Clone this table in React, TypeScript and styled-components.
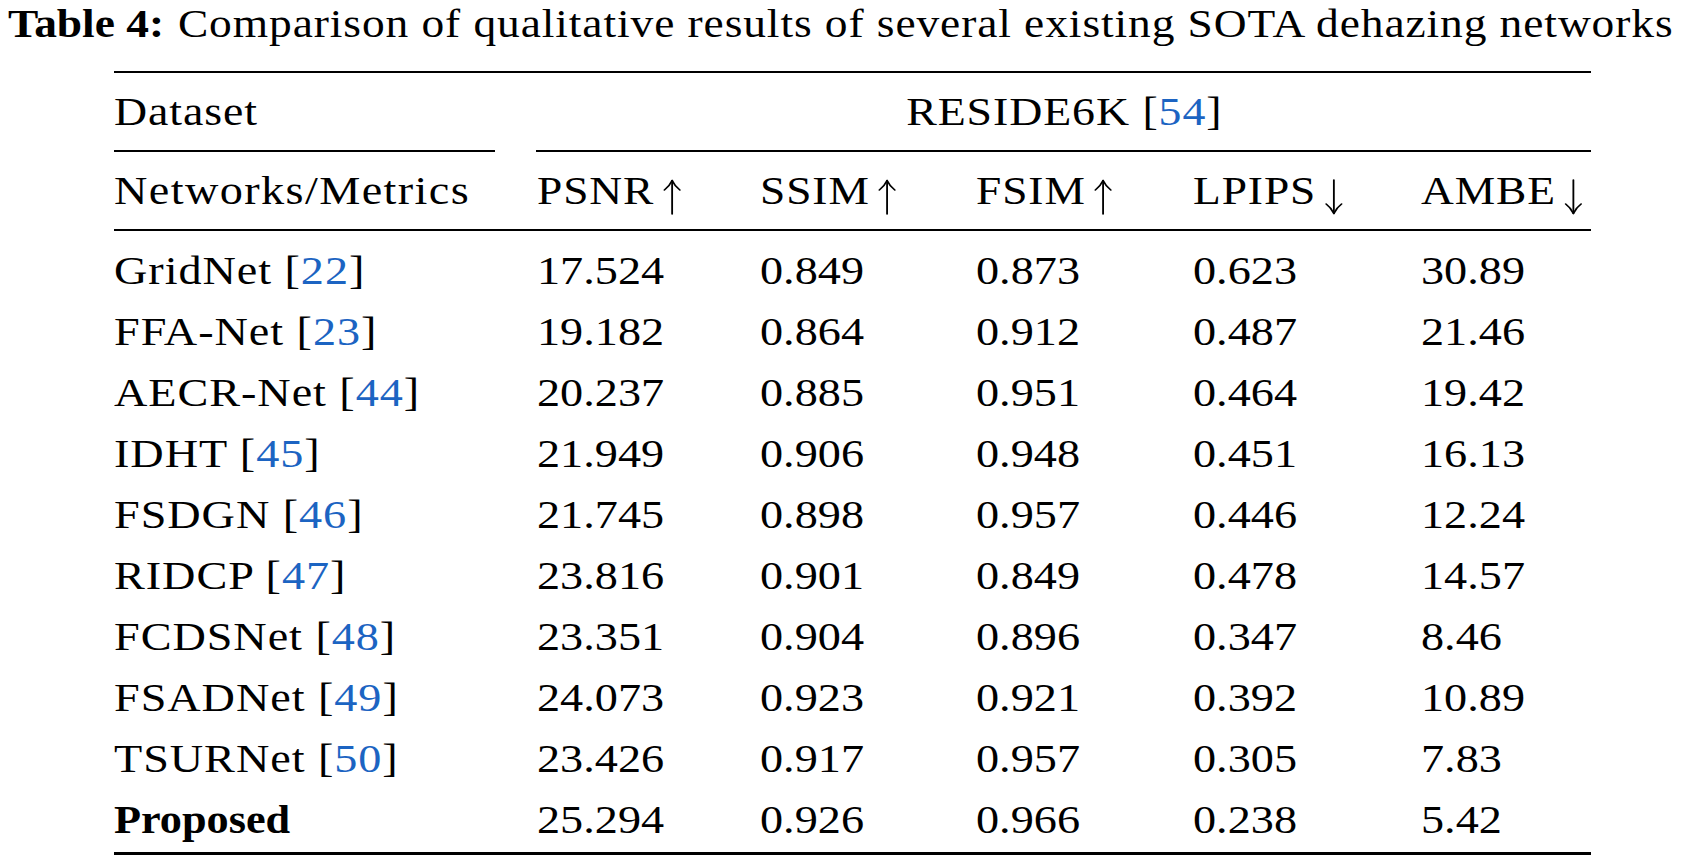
import React from "react";
import styled, { createGlobalStyle } from "styled-components";

const GlobalStyle = createGlobalStyle`
  html, body { margin: 0; padding: 0; background: #ffffff; }
  body { font-family: "Liberation Serif", "Times New Roman", serif; color: #000; }
`;

const COLS = "423px 223px 216px 217px 228px 170px";
const LINK = "#1c64c2";

const Page = styled.div`
  width: 1696px;
  height: 862px;
  overflow: hidden;
  font-family: "Liberation Serif", "Times New Roman", serif;
  font-size: 39.5px;
  color: #000;
`;

const Caption = styled.div`
  padding: 2px 0 0 8px;
  line-height: 44px;
  white-space: nowrap;
`;

const CaptionLabel = styled.span`
  font-weight: bold;
  margin-right: 12px;
  letter-spacing: 0;
`;

/* Typeset text: the reference face is set a little wider than Liberation Serif */
const Txt = styled.span<{ $sx?: number; $ls?: number; $origin?: string }>`
  display: inline-block;
  white-space: nowrap;
  transform: scaleX(${(p) => p.$sx ?? 1.15});
  transform-origin: ${(p) => p.$origin ?? "left"} center;
  letter-spacing: ${(p) => p.$ls ?? 0.8}px;
`;

const Table = styled.div`
  margin: 25px 0 0 114px;
  width: 1477px;
`;

const Rule = styled.div<{ $thick?: number }>`
  height: ${(p) => p.$thick ?? 2}px;
  background: #000;
`;

const Row = styled.div<{ $pad?: string }>`
  display: grid;
  grid-template-columns: ${COLS};
  line-height: 61px;
  height: 61px;
  padding: ${(p) => p.$pad ?? "0"};
  white-space: nowrap;
`;

const Body = styled.div`
  padding: 10px 0 1px;
`;

const Cell = styled.div<{ $bold?: boolean }>`
  font-weight: ${(p) => (p.$bold ? "bold" : "normal")};
`;

const SpanCell = styled.div`
  grid-column: 2 / 7;
  text-align: center;
`;

const CmidRow = styled.div`
  display: grid;
  grid-template-columns: ${COLS};
  height: 2px;
`;

const CmidLeft = styled.div`
  background: #000;
  margin-right: 42px;
`;

const CmidRight = styled.div`
  grid-column: 2 / 7;
  background: #000;
  margin-left: -1px;
`;

const Ref = styled.span`
  color: ${LINK};
`;

const ArrowSvg = styled.svg`
  width: 17px;
  height: 36px;
  margin-left: 7px;
  vertical-align: -11px;
  overflow: visible;
`;

const Arrow = ({ dir }: { dir: "up" | "down" }) => (
  <ArrowSvg viewBox="0 0 17 36" aria-hidden="true">
    <g
      fill="none"
      stroke="#000"
      strokeWidth={1.6}
      strokeLinecap="round"
      strokeLinejoin="round"
      transform={dir === "down" ? "rotate(180 8.5 18)" : undefined}
    >
      <path d="M8.5 1.5 L8.5 35" />
      <path d="M1.8 11 Q6 7.5 8.5 1.5 Q11 7.5 15.2 11" />
    </g>
  </ArrowSvg>
);

const Cite = ({ n }: { n: number }) => (
  <>
    {" "}[<Ref>{n}</Ref>]
  </>
);

const metrics: { label: string; dir: "up" | "down" }[] = [
  { label: "PSNR", dir: "up" },
  { label: "SSIM", dir: "up" },
  { label: "FSIM", dir: "up" },
  { label: "LPIPS", dir: "down" },
  { label: "AMBE", dir: "down" },
];

const rows: { name: string; ref?: number; bold?: boolean; v: string[] }[] = [
  { name: "GridNet", ref: 22, v: ["17.524", "0.849", "0.873", "0.623", "30.89"] },
  { name: "FFA-Net", ref: 23, v: ["19.182", "0.864", "0.912", "0.487", "21.46"] },
  { name: "AECR-Net", ref: 44, v: ["20.237", "0.885", "0.951", "0.464", "19.42"] },
  { name: "IDHT", ref: 45, v: ["21.949", "0.906", "0.948", "0.451", "16.13"] },
  { name: "FSDGN", ref: 46, v: ["21.745", "0.898", "0.957", "0.446", "12.24"] },
  { name: "RIDCP", ref: 47, v: ["23.816", "0.901", "0.849", "0.478", "14.57"] },
  { name: "FCDSNet", ref: 48, v: ["23.351", "0.904", "0.896", "0.347", "8.46"] },
  { name: "FSADNet", ref: 49, v: ["24.073", "0.923", "0.921", "0.392", "10.89"] },
  { name: "TSURNet", ref: 50, v: ["23.426", "0.917", "0.957", "0.305", "7.83"] },
  { name: "Proposed", bold: true, v: ["25.294", "0.926", "0.966", "0.238", "5.42"] },
];

export default function App() {
  return (
    <Page>
      <GlobalStyle />
      <Caption>
        <Txt>
          <CaptionLabel>Table 4:</CaptionLabel>
          Comparison of qualitative results of several existing SOTA dehazing networks
        </Txt>
      </Caption>
      <Table>
        <Rule $thick={2} />
        <Row $pad="9px 0 7px">
          <Cell>
            <Txt $sx={1.16}>Dataset</Txt>
          </Cell>
          <SpanCell>
            <Txt $origin="center" $sx={1.16}>
              RESIDE6K<Cite n={54} />
            </Txt>
          </SpanCell>
        </Row>
        <CmidRow>
          <CmidLeft />
          <CmidRight />
        </CmidRow>
        <Row $pad="9px 0 7px">
          <Cell>
            <Txt $sx={1.17} $ls={1.2}>
              Networks/Metrics
            </Txt>
          </Cell>
          {metrics.map((m) => (
            <Cell key={m.label}>
              <Txt $sx={1.15}>
                {m.label}
                <Arrow dir={m.dir} />
              </Txt>
            </Cell>
          ))}
        </Row>
        <Rule $thick={2} />
        <Body>
          {rows.map((r) => (
            <Row key={r.name}>
              <Cell $bold={r.bold}>
                {r.bold ? (
                  <Txt $sx={1.12} $ls={0}>
                    {r.name}
                  </Txt>
                ) : (
                  <Txt $sx={1.17}>
                    {r.name}
                    {r.ref !== undefined && <Cite n={r.ref} />}
                  </Txt>
                )}
              </Cell>
              {r.v.map((val, i) => (
                <Cell key={i}>
                  <Txt $sx={1.17} $ls={0}>
                    {val}
                  </Txt>
                </Cell>
              ))}
            </Row>
          ))}
        </Body>
        <Rule $thick={3} />
      </Table>
    </Page>
  );
}
